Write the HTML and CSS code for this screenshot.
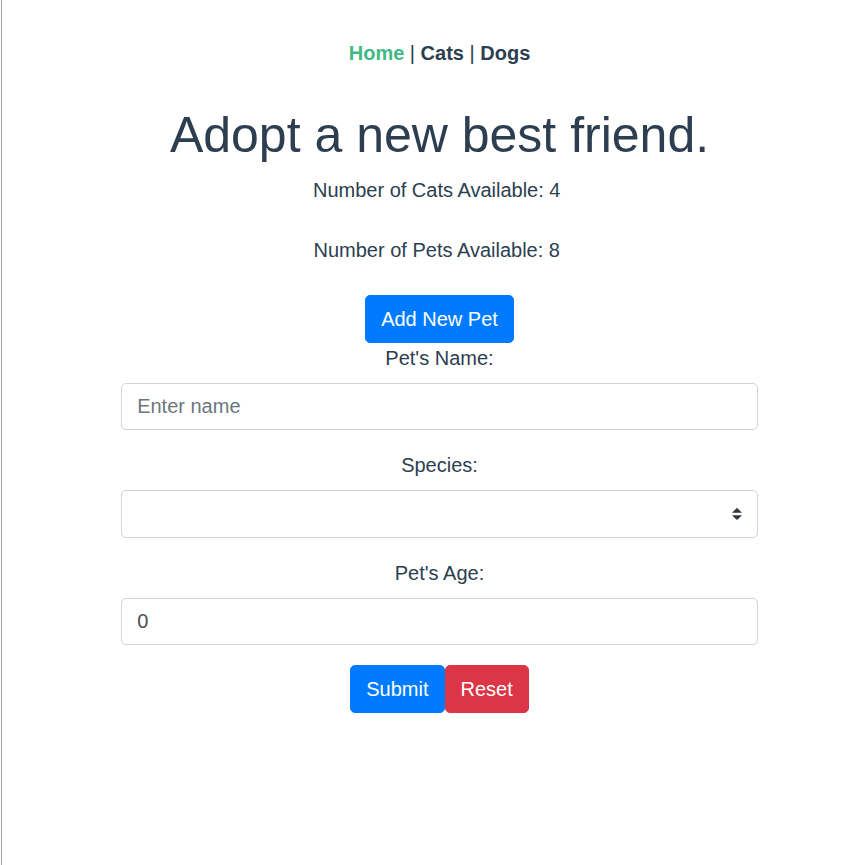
FILE: index.html
```html
<!DOCTYPE html>
<html lang="en">
<head>
<meta charset="utf-8">
<title>Adopt a new best friend</title>
<link rel="stylesheet" href="styles.css">
</head>
<body>
<div class="page">
  <div class="app">
    <nav class="nav">
      <a class="nav-link active" href="#">Home</a> | <a class="nav-link" href="#">Cats</a> | <a class="nav-link" href="#">Dogs</a>
    </nav>
    <h1 class="title">Adopt a new best friend.</h1>
    <p class="stat">Number of Cats Available: 4&nbsp;</p>
    <p class="stat">Number of Pets Available: 8&nbsp;</p>
    <div class="add-row"><button class="btn btn-primary" type="button">Add New Pet</button></div>
    <form class="pet-form">
      <div class="form-group">
        <label class="form-label" for="name">Pet's Name:</label>
        <input class="form-control" id="name" type="text" placeholder="Enter name">
      </div>
      <div class="form-group">
        <label class="form-label" for="species">Species:</label>
        <div class="select-wrap">
          <select class="form-control custom-select" id="species">
            <option value=""></option>
          </select>
          <svg class="select-arrow" viewBox="0 0 4 5" width="10" height="12.5" aria-hidden="true"><path fill="#343a40" d="M2 0L0 2h4zm0 5L0 3h4z"/></svg>
        </div>
      </div>
      <div class="form-group">
        <label class="form-label" for="age">Pet's Age:</label>
        <input class="form-control" id="age" type="number" value="0">
      </div>
      <div class="actions"><button class="btn btn-primary" type="submit">Submit</button><button class="btn btn-danger" type="reset">Reset</button></div>
    </form>
  </div>
</div>
</body>
</html>
```

FILE: styles.css
```css
html, body {
  margin: 0;
  padding: 0;
  background: #fff;
}

.page {
  margin-left: 1px;
  border-left: 1px solid #a0a0a0;
  padding-left: 13px;
  min-height: 865px;
  box-sizing: border-box;
}

.app {
  font-family: "Liberation Sans", Arial, Helvetica, sans-serif;
  font-size: 20px;
  line-height: 1.5;
  color: #2c3e50;
  text-align: center;
}

.nav {
  padding: 37.5px;
}

.nav-link {
  font-weight: bold;
  color: #2c3e50;
  text-decoration: none;
}

.nav-link.active {
  color: #42b983;
}

.title {
  font-size: 50px;
  line-height: 1.2;
  font-weight: 500;
  margin: 0 0 10px;
}

.stat {
  margin: 0 0 30px;
}

.btn {
  display: inline-block;
  font-family: inherit;
  font-size: 20px;
  line-height: 1.5;
  padding: 7.75px 15px;
  border: 1px solid transparent;
  border-radius: 5px;
  color: #fff;
  cursor: pointer;
  vertical-align: middle;
}

.btn-primary {
  background: #007bff;
  border-color: #007bff;
}

.btn-danger {
  background: #dc3545;
  border-color: #dc3545;
}

.pet-form {
  width: 75%;
  margin: 0 auto;
}

.form-group {
  margin-bottom: 20px;
}

.form-label {
  display: block;
  margin-bottom: 10px;
}

.form-control {
  display: block;
  width: 100%;
  height: 47.5px;
  box-sizing: border-box;
  padding: 7.5px 15px;
  font-family: inherit;
  font-size: 20px;
  line-height: 1.5;
  color: #495057;
  background: #fff;
  border: 1px solid #ced4da;
  border-radius: 5px;
  text-align: left;
  margin: 0;
}

.form-control::placeholder {
  color: #6c757d;
  opacity: 1;
}

input[type=number]::-webkit-inner-spin-button,
input[type=number]::-webkit-outer-spin-button {
  -webkit-appearance: none;
  margin: 0;
}

.select-wrap {
  position: relative;
}

.custom-select {
  -webkit-appearance: none;
  appearance: none;
  padding-right: 40px;
}

.select-arrow {
  position: absolute;
  right: 16px;
  top: 50%;
  transform: translateY(-50%);
  pointer-events: none;
}

.actions {
  font-size: 0;
}
```
